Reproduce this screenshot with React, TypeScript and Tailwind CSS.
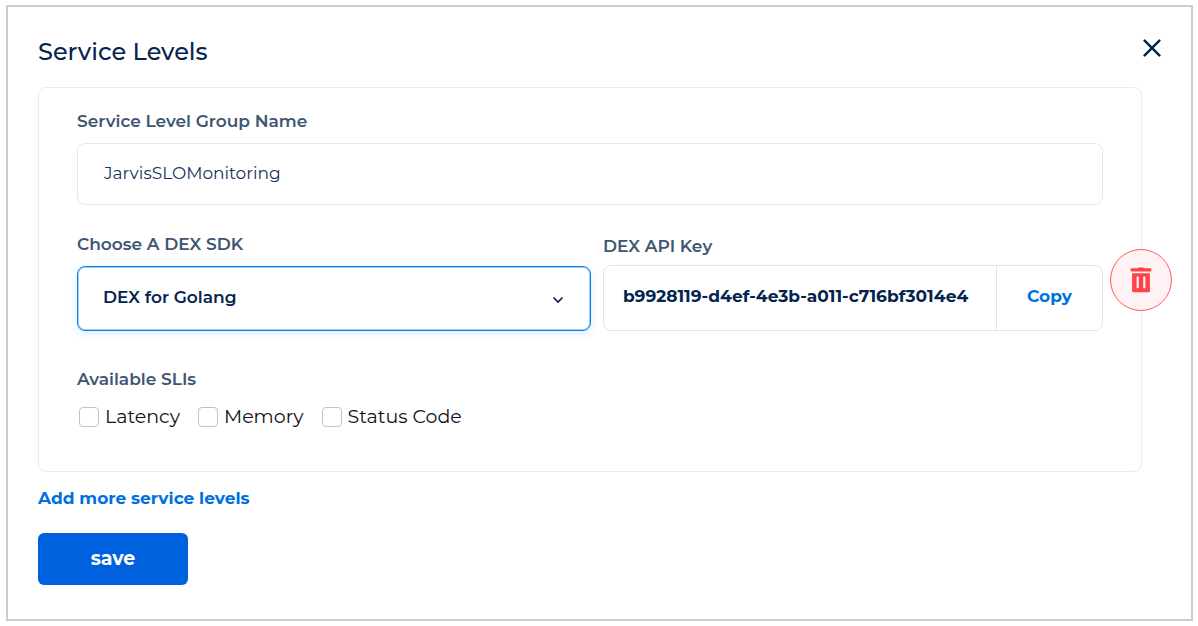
import { useState } from "react";

const indicators = ["Latency", "Memory", "Status Code"];

function CloseIcon() {
  return (
    <svg viewBox="0 0 18 18" className="size-[18px]" fill="none" stroke="currentColor" strokeWidth="2.4" strokeLinecap="round" aria-hidden="true">
      <path d="M1.6 1.6 16.4 16.4M16.4 1.6 1.6 16.4" />
    </svg>
  );
}

function TrashIcon() {
  return (
    <svg viewBox="0 0 22 26" className="h-[26px] w-[22px]" fill="currentColor" aria-hidden="true">
      <path d="M7.6 1.2Q7.8.4 8.6.4h4.8q.8 0 1 .8h6q1 0 1 1v1.400q0 1-1 1H1.600q-1 0-1-1V2.200q0-1 1-1z" />
      <path fillRule="evenodd" d="M2.100 6.200h17.800v17.600q0 1.500-1.500 1.500H3.600q-1.500 0-1.500-1.500zM6.600 9.400h2.200v11.800H6.600zM13.200 9.400h2.200v11.800h-2.200z" />
    </svg>
  );
}

export default function App() {
  const [name, setName] = useState("JarvisSLOMonitoring");
  const label = "text-[17px] leading-6 font-semibold text-[#3f5672]";

  return (
    <main className="mt-[5px] mr-[5px] ml-[6px] border-2 border-[#cccccc] bg-white px-[30px] pt-[29px] pb-[34px] font-['Metropolis','Montserrat','Inter',sans-serif] text-[#04234f]">
      <header className="mb-[19px] flex h-8 items-center justify-between">
        <h1 className="text-2xl leading-8 font-medium">Service Levels</h1>
        <button type="button" aria-label="Close" className="mb-[9px]">
          <CloseIcon />
        </button>
      </header>

      <form onSubmit={(e) => e.preventDefault()}>
        <section className="relative mr-[19px] rounded-lg border border-[#ececee] px-[38px] pt-[21px] pb-[42px]">
          <label htmlFor="group" className={`block ${label}`}>Service Level Group Name</label>
          <input
            id="group"
            value={name}
            onChange={(e) => setName(e.target.value)}
            className="mt-[10px] block h-[62px] w-full rounded-lg border border-[#e3eaf6] px-[26px] pb-[2px] text-[17px] text-[#16325c] outline-none"
          />

          <div className="mt-[27px] grid grid-cols-[514fr_500fr] items-end gap-3">
            <div>
              <label htmlFor="sdk" className={`block ${label}`}>Choose A DEX SDK</label>
              <div className="relative mt-[10px]">
                <select
                  id="sdk"
                  className="block h-[65px] w-full appearance-none rounded-lg border border-[#0a82ea] bg-white px-[25px] pb-[2px] text-[17px] font-semibold shadow-[inset_0_0_0_1px_rgba(10,130,234,0.4),0_3px_8px_rgba(10,130,234,0.14)] outline-none"
                >
                  <option>DEX for Golang</option>
                </select>
                <svg viewBox="0 0 12 8" className="pointer-events-none absolute top-[30px] right-[27px] h-2 w-3" fill="none" stroke="currentColor" strokeWidth="1.7" aria-hidden="true">
                  <path d="m1.500 1.500 4.500 4.500 4.500-4.500" />
                </svg>
              </div>
            </div>
            <div>
              <label htmlFor="key" className={`block ${label}`}>DEX API Key</label>
              <div className="mt-[7px] flex h-[66px] rounded-lg border border-[#dde4ee]">
                <input
                  id="key"
                  readOnly
                  value="b9928119-d4ef-4e3b-a011-c716bf3014e4"
                  className="min-w-0 flex-1 pb-[2px] pl-[19px] text-[17px] font-bold outline-none"
                />
                <button type="button" className="w-[106px] border-l border-[#dde4ee] pb-[2px] text-[17px] font-bold text-[#0073e0]">
                  Copy
                </button>
              </div>
            </div>
          </div>

          <fieldset className="mt-9">
            <legend className={label}>Available SLIs</legend>
            <div className="mt-[14px] ml-[2px] flex gap-[18px]">
              {indicators.map((item) => (
                <label key={item} className="flex items-center gap-[6px] text-[19px] leading-6 text-[#111111]">
                  <input type="checkbox" className="size-5 appearance-none rounded-[4px] border border-[#bcc3d3] bg-white checked:bg-[#0061df]" />
                  {item}
                </label>
              ))}
            </div>
          </fieldset>

          <button
            type="button"
            aria-label="Delete service level"
            className="absolute top-[161px] -right-[31px] flex size-[62px] items-center justify-center rounded-full border border-[#ff5a5a] bg-[#fff2f4] text-[#ff4245]"
          >
            <TrashIcon />
          </button>
        </section>

        <a href="#add" className="mt-[14px] block w-fit text-[17px] leading-6 font-bold text-[#0070e0]">
          Add more service levels
        </a>
        <button type="submit" className="mt-[23px] block h-[52px] w-[150px] rounded-md bg-[#0061df] text-[19px] font-bold text-white">
          save
        </button>
      </form>
    </main>
  );
}
